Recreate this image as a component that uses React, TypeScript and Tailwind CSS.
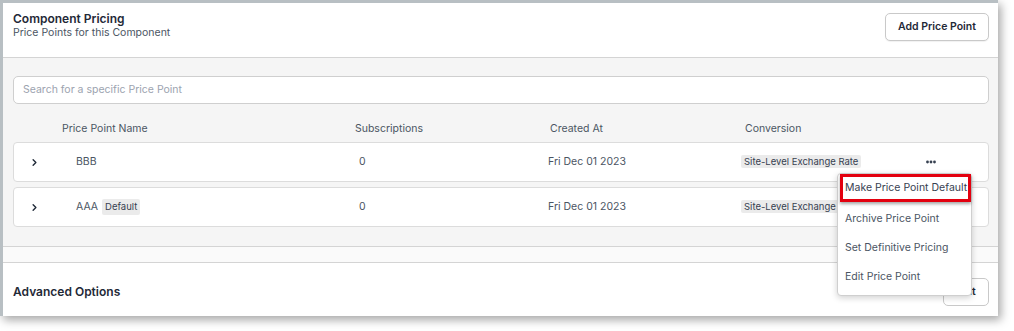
import React from 'react';
import { ChevronRight } from 'lucide-react';

const font = { fontFamily: 'Inter, "Liberation Sans", sans-serif' };

interface PricePoint {
  name: string;
  isDefault?: boolean;
  subscriptions: number;
  createdAt: string;
  conversion: string;
}

const pricePoints: PricePoint[] = [
  { name: 'BBB', subscriptions: 0, createdAt: 'Fri Dec 01 2023', conversion: 'Site-Level Exchange Rate' },
  { name: 'AAA', isDefault: true, subscriptions: 0, createdAt: 'Fri Dec 01 2023', conversion: 'Site-Level Exchange Rate' },
];

function Dots() {
  return (
    <svg width="10" height="4" viewBox="0 0 10 4" className="text-[#374151]">
      <circle cx="1.5" cy="2" r="1.4" fill="currentColor" />
      <circle cx="5" cy="2" r="1.4" fill="currentColor" />
      <circle cx="8.5" cy="2" r="1.4" fill="currentColor" />
    </svg>
  );
}

function PriceRow({ point, showMenu }: { point: PricePoint; showMenu?: boolean }) {
  return (
    <div className="flex items-center h-[40px] bg-white border border-[#dcdcdc] rounded-[4px] text-[10.5px] text-[#4b5563]">
      <div className="w-[62px] pl-[15px] text-[#1f2937]">
        <ChevronRight size={11} strokeWidth={3} />
      </div>
      <div className="w-[283px] flex items-center gap-[4px]">
        <span>{point.name}</span>
        {point.isDefault && (
          <span className="bg-[#ebebeb] rounded-[2px] px-[3px] py-[1px] text-[9.5px] text-[#374151]">Default</span>
        )}
      </div>
      <div className="w-[189px]">{point.subscriptions}</div>
      <div className="w-[193px]">{point.createdAt}</div>
      <div className="w-[185px]">
        <span className="bg-[#ebebeb] rounded-[2px] px-[3px] py-[1px] text-[9.5px] text-[#374151]">{point.conversion}</span>
      </div>
      <div className="w-[20px] flex items-center">{showMenu && <Dots />}</div>
    </div>
  );
}

export default function App() {
  return (
    <div className="w-[1014px] h-[331px] bg-white relative overflow-hidden" style={font}>
      <div className="w-[998px] h-[316px] bg-white border-l-[3px] border-t-[3px] border-[#b8bfc3] shadow-[3px_4px_9px_rgba(0,0,0,0.35)] flex flex-col">
        {/* Header */}
        <div className="h-[55px] flex items-start justify-between pl-[10px] pr-[9px] pt-[8px] border-b border-[#d4d4d4] shrink-0">
          <div>
            <div className="text-[12px] font-semibold text-[#1f2937] leading-[15px]">Component Pricing</div>
            <div className="text-[10.5px] text-[#4b5563] leading-[14px]">Price Points for this Component</div>
          </div>
          <button className="mt-[2px] h-[28px] px-[12px] bg-white border border-[#c9c9c9] rounded-[5px] text-[10.5px] font-semibold text-[#1f2937] shadow-[0_1px_1px_rgba(0,0,0,0.06)]">
            Add Price Point
          </button>
        </div>

        {/* Price points */}
        <div className="bg-[#f5f5f5] pl-[10px] pr-[9px] pt-[18px] pb-[19px] border-b border-[#d4d4d4] shrink-0">
          <div className="h-[28px] bg-white border border-[#cfcfcf] rounded-[5px] flex items-center px-[9px] text-[10.5px] text-[#9ca3af]">
            Search for a specific Price Point
          </div>
          <div className="flex h-[38px] pt-[18px] leading-[14px] text-[10.5px] text-[#4b5563]">
            <div className="w-[49px]" />
            <div className="w-[293px]">Price Point Name</div>
            <div className="w-[195px]">Subscriptions</div>
            <div className="w-[195px]">Created At</div>
            <div>Conversion</div>
          </div>
          <div className="flex flex-col gap-[5px]">
            {pricePoints.map((p, i) => (
              <PriceRow key={p.name} point={p} showMenu={i === 0} />
            ))}
          </div>
        </div>

        <div className="h-[16px] bg-[#fafafa] border-b border-[#d4d4d4] shrink-0" />

        {/* Advanced options */}
        <div className="flex-1 flex items-center justify-between pl-[10px] pr-[9px] pt-[5px]">
          <div className="text-[12px] font-semibold text-[#1f2937]">Advanced Options</div>
          <button className="h-[28px] w-[46px] bg-white border border-[#c9c9c9] rounded-[5px] text-[10.5px] font-semibold text-[#1f2937]">
            Edit
          </button>
        </div>
      </div>

      {/* Dropdown menu */}
      <div className="absolute left-[837px] top-[173px] w-[135px] h-[123px] bg-white border border-[#cfcfcf] rounded-[4px] shadow-[0_2px_6px_rgba(0,0,0,0.18)] text-[10.5px] text-[#4b5563]">
        <div className="ml-[2px] h-[28px] border-[3px] border-[#e3000f] flex items-center pl-[2px] text-[#374151] shadow-[0_2px_3px_rgba(0,0,0,0.35)] whitespace-nowrap">
          Make Price Point Default
        </div>
        <div className="h-[2px]" />
        <div className="h-[29px] flex items-center pl-[7px]">Archive Price Point</div>
        <div className="h-[29px] flex items-center pl-[7px]">Set Definitive Pricing</div>
        <div className="h-[29px] pt-[1px] flex items-center pl-[7px]">Edit Price Point</div>
      </div>
    </div>
  );
}
